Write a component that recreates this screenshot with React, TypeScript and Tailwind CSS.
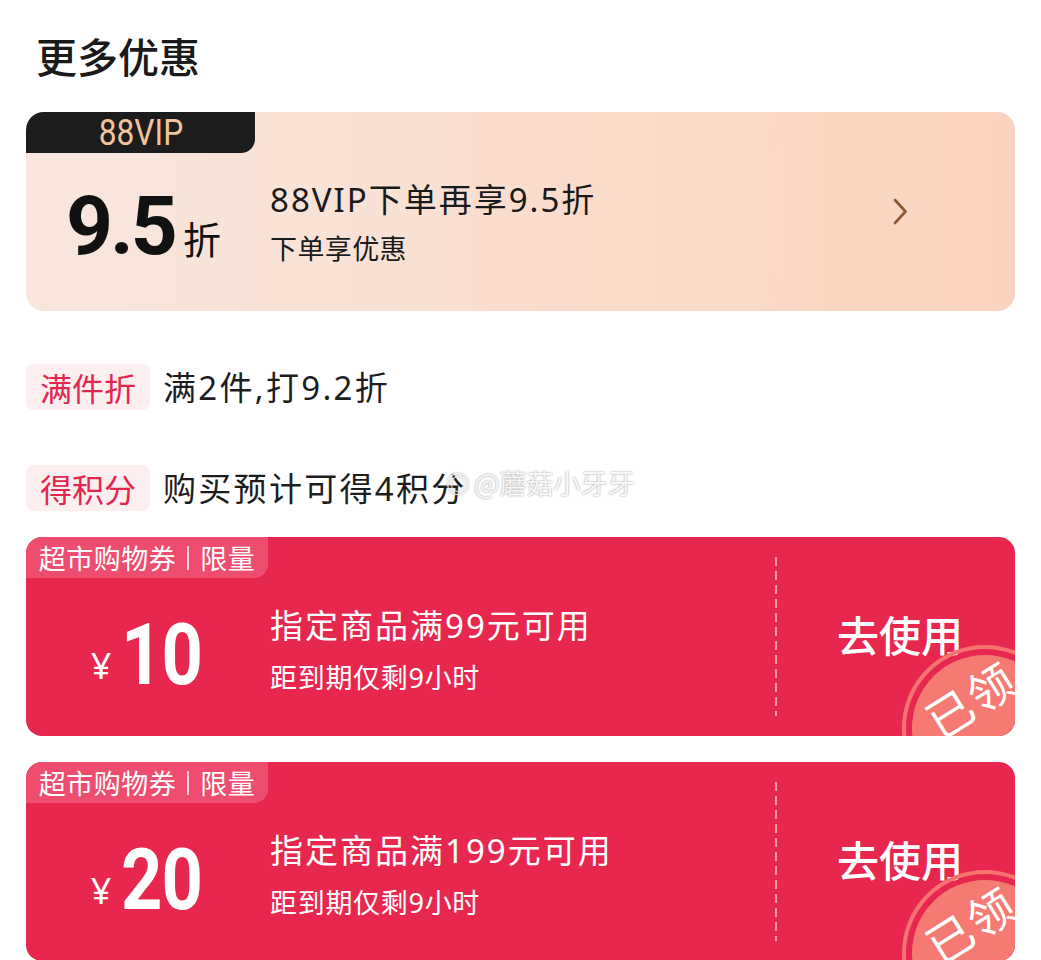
import React from "react";

const CJK = "font-['Noto_Sans_CJK_SC','Noto_Sans',sans-serif]";
const MIX = "font-['Noto_Sans','Noto_Sans_CJK_SC',sans-serif]";

function Stamp() {
  return (
    <div className="pointer-events-none absolute left-[876px] top-[108px] h-[166px] w-[166px] rounded-full border-[4px] border-[#f6746f]">
      <div className="absolute inset-[6px] rounded-full bg-[#f47a72]" />
      <div
        className={`absolute left-[16px] top-[26px] -rotate-[32deg] text-[46px] leading-none tracking-[2px] text-white ${CJK}`}
      >
        已领
      </div>
    </div>
  );
}

function Coupon({ amount, cond }: { amount: string; cond: string }) {
  return (
    <div className="relative flex h-[199px] overflow-hidden rounded-[16px] bg-[#e8274f] text-white">
      <div className="flex w-[749px] flex-col">
        <div
          className={`flex h-[41px] w-[242px] items-center justify-center rounded-br-[14px] bg-[#ef4d6f] text-[27px] leading-none tracking-[0.5px] ${CJK}`}
        >
          超市购物券
          <span className="mx-[11px] inline-block h-[24px] w-[2px] bg-white/75" />
          限量
        </div>
        <div className="flex flex-1 items-center pb-[4px]">
          <div className="flex w-[244px] items-baseline justify-center pr-[4px]">
            <span className={`mr-[10px] -translate-y-[5px] text-[36px] leading-none ${MIX}`}>¥</span>
            <span className="inline-block w-[80px] origin-left scale-x-[0.84] font-['Roboto',sans-serif] text-[86px] font-bold leading-none tracking-[-1px]">
              {amount}
            </span>
          </div>
          <div className={`flex flex-col pb-[10px] ${MIX}`}>
            <div className="text-[33px] leading-[40px] tracking-[2px]">{cond}</div>
            <div className="mt-[16px] text-[27px] leading-[32px] tracking-[0.7px]">距到期仅剩9小时</div>
          </div>
        </div>
      </div>
      <div className="my-[20px] w-[2px] bg-[repeating-linear-gradient(to_bottom,#f59ab0_0_9px,transparent_9px_14px)]" />
      <div className="flex flex-1 items-center justify-center pb-[6px] pl-[8px]">
        <span className={`text-[42px] font-medium leading-none ${CJK}`}>去使用</span>
      </div>
      <Stamp />
    </div>
  );
}

function TagRow({ tag, text }: { tag: string; text: string }) {
  return (
    <div className="flex items-center">
      <div
        className={`flex h-[46px] w-[124px] items-center justify-center rounded-[8px] bg-[#fdeef0] text-[32px] leading-none text-[#e2264d] ${CJK}`}
      >
        {tag}
      </div>
      <div className={`ml-[13px] text-[33px] leading-none tracking-[2.3px] text-[#1d1d1f] ${MIX}`}>{text}</div>
    </div>
  );
}

export default function App() {
  return (
    <div className="relative min-h-[960px] w-[1041px] overflow-hidden bg-white">
      <div className="flex h-[112px] items-center pb-[2px] pl-[36px]">
        <h1 className={`text-[41px] font-medium leading-none text-[#1a1a1a] ${CJK}`}>更多优惠</h1>
      </div>

      <div className="px-[26px]">
        {/* 88VIP card */}
        <div className="relative flex h-[199px] flex-col overflow-hidden rounded-[18px] bg-[linear-gradient(90deg,#f8e6dd_0%,#f9e0d2_45%,#f9d5c0_75%,#f8c7aa_100%)]">
          <div className="pointer-events-none absolute left-[440px] top-[-110px] h-[420px] w-[320px] rounded-full bg-[#fbdccb]/60" />
          <div className="pointer-events-none absolute left-[748px] top-[-110px] h-[420px] w-[300px] rounded-full bg-[#fbd9c6]/70" />
          <div className="relative flex h-[41px] w-[229px] items-center justify-center rounded-br-[14px] bg-[#1c1c1c]">
            <span className="inline-block scale-x-[0.88] font-['Roboto',sans-serif] text-[36px] leading-none text-[#f3c39b]">
              88VIP
            </span>
          </div>
          <div className="relative flex flex-1 items-center pb-[12px] pl-[40px]">
            <div className="flex w-[204px] items-baseline">
              <span className="font-['Roboto',sans-serif] text-[82px] font-bold leading-none tracking-[-3px] text-[#111]">
                9.5
              </span>
              <span className={`ml-[8px] text-[38px] leading-none text-[#111] ${CJK}`}>折</span>
            </div>
            <div className={`flex flex-col pb-[6px] text-[#1a1a1a] ${MIX}`}>
              <div className="text-[33px] leading-[40px] tracking-[2px]">88VIP下单再享9.5折</div>
              <div className="mt-[12px] text-[27px] leading-[34px] tracking-[0.4px]">下单享优惠</div>
            </div>
            <svg
              className="absolute left-[866px] top-[45px]"
              width="16"
              height="30"
              viewBox="0 0 16 30"
              fill="none"
            >
              <path d="M3 2 L13.5 13.5 L3 25" stroke="#8b5a2b" strokeWidth="2.6" strokeLinecap="round" strokeLinejoin="round" />
            </svg>
          </div>
        </div>

        <div className="mt-[53px]">
          <TagRow tag="满件折" text="满2件,打9.2折" />
        </div>
        <div className="relative mt-[55px]">
          <TagRow tag="得积分" text="购买预计可得4积分" />
          <div
            className={`pointer-events-none absolute left-[420px] top-[4px] flex items-center text-[27px] leading-none text-white/90 [text-shadow:0_0_2px_#8a8a8a] ${CJK}`}
          >
            <span className="mr-[4px] text-[24px]">◎</span>@蘑菇小牙牙
          </div>
        </div>

        <div className="mt-[26px] flex flex-col gap-[26px]">
          <Coupon amount="10" cond="指定商品满99元可用" />
          <Coupon amount="20" cond="指定商品满199元可用" />
        </div>
      </div>
    </div>
  );
}
